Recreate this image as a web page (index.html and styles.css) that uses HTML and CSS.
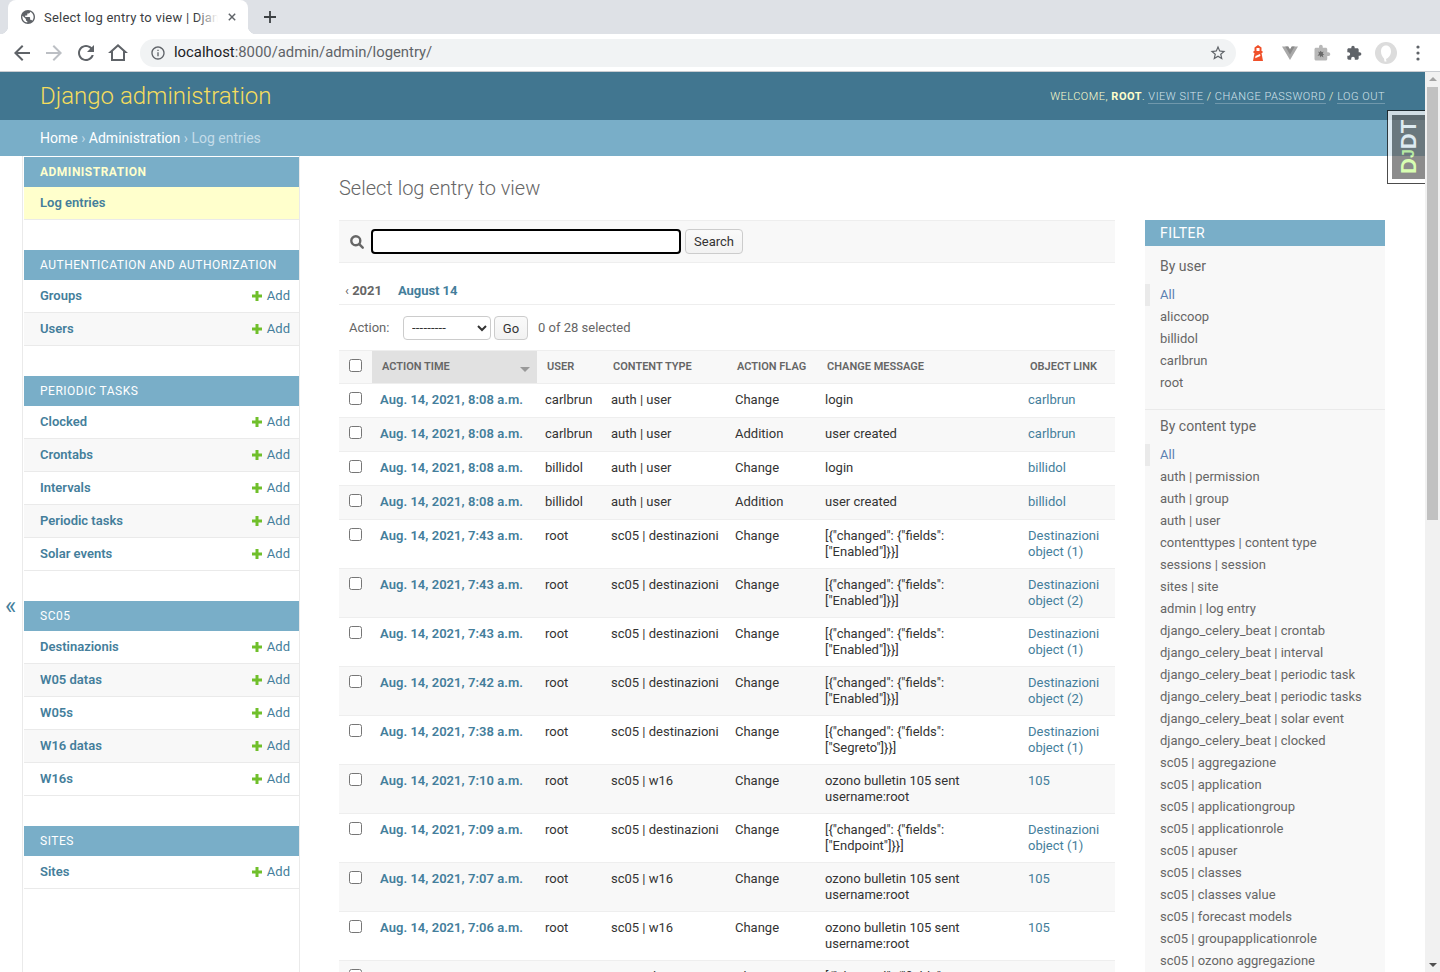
FILE: index.html
```html
<!DOCTYPE html>
<html lang="en">
<head>
<meta charset="utf-8">
<title>Select log entry to view | Django site admin</title>
<link rel="stylesheet" href="styles.css">
</head>
<body>
<div class="window">
  <div class="chrome">
    <div class="tabstrip">
      <div class="tab">
        <svg class="tab-globe" viewBox="2 2 20 20"><path d="M12 2C6.48 2 2 6.48 2 12s4.48 10 10 10 10-4.48 10-10S17.52 2 12 2zm-1 17.93c-3.95-.49-7-3.85-7-7.93 0-.62.08-1.21.21-1.79L9 15v1c0 1.1.9 2 2 2v1.93zm6.9-2.54c-.26-.81-1-1.39-1.9-1.39h-1v-3c0-.55-.45-1-1-1H8v-2h2c.55 0 1-.45 1-1V7h2c1.1 0 2-.9 2-2v-.41c2.93 1.19 5 4.06 5 7.41 0 2.08-.8 3.97-2.1 5.39z"/></svg>
        <span class="tab-title">Select log entry to view | Django site admin</span>
        <svg class="tab-close" viewBox="0 0 10 10"><path d="M1 1l8 8M9 1l-8 8"/></svg>
      </div>
      <svg class="new-tab" viewBox="0 0 12 12"><path d="M6 0v12M0 6h12"/></svg>
    </div>
    <div class="toolbar">
      <svg class="tool" viewBox="0 0 24 24"><path d="M20 11H7.83l5.59-5.59L12 4l-8 8 8 8 1.41-1.41L7.83 13H20v-2z"/></svg>
      <svg class="tool tool-off" viewBox="0 0 24 24"><path d="M12 4l-1.41 1.41L16.17 11H4v2h12.17l-5.58 5.59L12 20l8-8z"/></svg>
      <svg class="tool" viewBox="0 0 24 24"><path d="M17.65 6.35C16.2 4.9 14.21 4 12 4c-4.42 0-7.99 3.58-7.99 8s3.57 8 7.99 8c3.73 0 6.84-2.55 7.73-6h-2.08c-.82 2.33-3.04 4-5.65 4-3.31 0-6-2.69-6-6s2.69-6 6-6c1.66 0 3.14.69 4.22 1.78L13 11h7V4l-2.35 2.35z"/></svg>
      <svg class="tool" viewBox="0 0 24 24"><path d="M12 5.69l5 4.5V18H7v-7.81l5-4.5M12 3L2 12h3v8h14v-8h3L12 3z"/></svg>
      <div class="omnibox">
        <svg class="omni-info" viewBox="0 0 24 24"><path d="M11 7h2v2h-2zm0 4h2v6h-2zm1-9C6.48 2 2 6.48 2 12s4.48 10 10 10 10-4.48 10-10S17.52 2 12 2zm0 18c-4.41 0-8-3.59-8-8s3.59-8 8-8 8 3.59 8 8-3.59 8-8 8z"/></svg>
        <span class="url"><span class="url-host">localhost</span>:8000/admin/admin/logentry/</span>
        <svg class="omni-star" viewBox="0 0 24 24"><path d="M22 9.24l-7.19-.62L12 2 9.19 8.63 2 9.24l5.46 4.73L5.82 21 12 17.27 18.18 21l-1.63-7.03L22 9.24zM12 15.4l-3.76 2.27 1-4.28-3.32-2.88 4.38-.38L12 6.1l1.71 4.04 4.38.38-3.32 2.88 1 4.28L12 15.4z"/></svg>
      </div>
      <div class="extensions">
        <svg class="ext" viewBox="0 0 16 16"><path class="ext-red" d="M8 0l3.500 2.500V6H12.500v2h-1l1.500 8H3l1.500-8h-1V6H4.500V2.500z"/><path class="ext-white" d="M6.500 3h3v3h-3zM5.500 11l4.500-2 .4 2-5.200 2.300z"/></svg>
        <svg class="ext" viewBox="0 0 16 16"><path class="ext-vue-a" d="M0 1.500h6.200L8 4.600 9.800 1.500H16L8 15z"/><path class="ext-vue-b" d="M3.300 1.500h2.900L8 4.600 9.800 1.500h2.900L8 9.600z"/></svg>
        <svg class="ext ext-wide" viewBox="0 0 24 24"><path class="ext-puzzle-light" d="M20.500 11H19V7c0-1.100-.9-2-2-2h-4V3.500C13 2.120 11.880 1 10.500 1S8 2.120 8 3.500V5H4c-1.100 0-2 .9-2 2v13c0 1.100.9 2 2 2h13c1.100 0 2-.9 2-2v-4h1.500c1.380 0 2.500-1.120 2.500-2.500S21.880 11 20.500 11z"/><path class="ext-puzzle-noise" d="M7 10l2 1 1-2 2 2 2-1-1 3 2 1-2 1 1 3-3-2-1 2-1-3-3 1 2-3z"/></svg>
        <svg class="ext" viewBox="0 0 24 24"><path class="ext-puzzle" d="M20.500 11H19V7c0-1.100-.9-2-2-2h-4V3.500C13 2.120 11.880 1 10.500 1S8 2.120 8 3.500V5H4c-1.100 0-1.990.9-1.990 2v3.800H3.500c1.490 0 2.700 1.210 2.700 2.700s-1.210 2.700-2.700 2.700H2V20c0 1.100.9 2 2 2h3.800v-1.500c0-1.490 1.210-2.700 2.700-2.700 1.490 0 2.700 1.210 2.700 2.700V22H17c1.100 0 2-.9 2-2v-4h1.500c1.380 0 2.500-1.120 2.500-2.500S21.880 11 20.500 11z"/></svg>
        <svg class="avatar" viewBox="0 0 22 22"><circle class="avatar-bg" cx="11" cy="11" r="11"/><path class="avatar-head" d="M11 3.500c-3.200 0-5 2.500-5 6 0 3 1.500 5.500 3 7l.5 3h2l-.5-2.500c2.500-1 5-4 5-7.500 0-3.500-1.800-6-5-6z"/></svg>
        <svg class="menu-dots" viewBox="0 0 4 16"><circle cx="2" cy="2" r="1.600"/><circle cx="2" cy="8" r="1.600"/><circle cx="2" cy="14" r="1.600"/></svg>
      </div>
    </div>
  </div>

  <div class="viewport">
    <div class="page">
      <header class="site-header">
        <div class="branding">Django administration</div>
        <div class="user-tools">Welcome, <strong>root</strong>. <a href="#">View site</a> / <a href="#">Change password</a> / <a href="#">Log out</a></div>
      </header>
      <nav class="breadcrumbs"><a href="#">Home</a> › <a href="#">Administration</a> › Log entries</nav>

      <div class="main">
        <div class="toggle"><span class="toggle-glyph">«</span></div>
        <aside class="sidebar">
          <section class="module current">
            <h2 class="caption">Administration</h2>
            <div class="nav-row nav-current"><a class="nav-link" href="#">Log entries</a></div>
          </section>
          <section class="module">
            <h2 class="caption">Authentication and Authorization</h2>
            <div class="nav-row"><a class="nav-link" href="#">Groups</a><a class="add" href="#"><svg class="plus" viewBox="0 0 10 10"><path d="M3.500 0h3v3.500H10v3H6.500V10h-3V6.500H0v-3h3.500z"/></svg>Add</a></div>
            <div class="nav-row"><a class="nav-link" href="#">Users</a><a class="add" href="#"><svg class="plus" viewBox="0 0 10 10"><path d="M3.500 0h3v3.500H10v3H6.500V10h-3V6.500H0v-3h3.500z"/></svg>Add</a></div>
          </section>
          <section class="module">
            <h2 class="caption">Periodic Tasks</h2>
            <div class="nav-row"><a class="nav-link" href="#">Clocked</a><a class="add" href="#"><svg class="plus" viewBox="0 0 10 10"><path d="M3.500 0h3v3.500H10v3H6.500V10h-3V6.500H0v-3h3.500z"/></svg>Add</a></div>
            <div class="nav-row"><a class="nav-link" href="#">Crontabs</a><a class="add" href="#"><svg class="plus" viewBox="0 0 10 10"><path d="M3.500 0h3v3.500H10v3H6.500V10h-3V6.500H0v-3h3.500z"/></svg>Add</a></div>
            <div class="nav-row"><a class="nav-link" href="#">Intervals</a><a class="add" href="#"><svg class="plus" viewBox="0 0 10 10"><path d="M3.500 0h3v3.500H10v3H6.500V10h-3V6.500H0v-3h3.500z"/></svg>Add</a></div>
            <div class="nav-row"><a class="nav-link" href="#">Periodic tasks</a><a class="add" href="#"><svg class="plus" viewBox="0 0 10 10"><path d="M3.500 0h3v3.500H10v3H6.500V10h-3V6.500H0v-3h3.500z"/></svg>Add</a></div>
            <div class="nav-row"><a class="nav-link" href="#">Solar events</a><a class="add" href="#"><svg class="plus" viewBox="0 0 10 10"><path d="M3.500 0h3v3.500H10v3H6.500V10h-3V6.500H0v-3h3.500z"/></svg>Add</a></div>
          </section>
          <section class="module">
            <h2 class="caption">Sc05</h2>
            <div class="nav-row"><a class="nav-link" href="#">Destinazionis</a><a class="add" href="#"><svg class="plus" viewBox="0 0 10 10"><path d="M3.500 0h3v3.500H10v3H6.500V10h-3V6.500H0v-3h3.500z"/></svg>Add</a></div>
            <div class="nav-row"><a class="nav-link" href="#">W05 datas</a><a class="add" href="#"><svg class="plus" viewBox="0 0 10 10"><path d="M3.500 0h3v3.500H10v3H6.500V10h-3V6.500H0v-3h3.500z"/></svg>Add</a></div>
            <div class="nav-row"><a class="nav-link" href="#">W05s</a><a class="add" href="#"><svg class="plus" viewBox="0 0 10 10"><path d="M3.500 0h3v3.500H10v3H6.500V10h-3V6.500H0v-3h3.500z"/></svg>Add</a></div>
            <div class="nav-row"><a class="nav-link" href="#">W16 datas</a><a class="add" href="#"><svg class="plus" viewBox="0 0 10 10"><path d="M3.500 0h3v3.500H10v3H6.500V10h-3V6.500H0v-3h3.500z"/></svg>Add</a></div>
            <div class="nav-row"><a class="nav-link" href="#">W16s</a><a class="add" href="#"><svg class="plus" viewBox="0 0 10 10"><path d="M3.500 0h3v3.500H10v3H6.500V10h-3V6.500H0v-3h3.500z"/></svg>Add</a></div>
          </section>
          <section class="module">
            <h2 class="caption">Sites</h2>
            <div class="nav-row"><a class="nav-link" href="#">Sites</a><a class="add" href="#"><svg class="plus" viewBox="0 0 10 10"><path d="M3.500 0h3v3.500H10v3H6.500V10h-3V6.500H0v-3h3.500z"/></svg>Add</a></div>
          </section>
        </aside>

        <main class="content">
          <h1 class="title">Select log entry to view</h1>
          <div class="changelist">
            <div class="results-col">
              <form class="search-bar">
                <svg class="search-icon" viewBox="0 0 14 14"><circle cx="5.800" cy="5.800" r="4.500"/><path d="M9.200 9.200l3.500 3.500"/></svg>
                <input class="search-input" type="text">
                <button class="btn btn-search" type="button">Search</button>
              </form>
              <div class="date-links"><span class="date-back">‹</span> <span class="date-year">2021</span><a class="date-day" href="#">August 14</a></div>
              <div class="actions">
                <span class="action-label">Action:</span>
                <select class="action-select"><option>---------</option></select>
                <button class="btn btn-go" type="button">Go</button>
                <span class="action-counter">0 of 28 selected</span>
              </div>
              <table class="results">
                <colgroup>
                  <col class="c-check"><col class="c-time"><col class="c-user"><col class="c-type"><col class="c-flag"><col class="c-msg"><col class="c-obj">
                </colgroup>
                <thead>
                  <tr>
                    <th class="th-check"><input class="check" type="checkbox"></th>
                    <th class="th-sorted"><span class="th-text">Action time</span><span class="sort-arrow"></span></th>
                    <th><span class="th-text">User</span></th>
                    <th><span class="th-text">Content type</span></th>
                    <th><span class="th-text">Action flag</span></th>
                    <th><span class="th-text">Change message</span></th>
                    <th><span class="th-text">Object link</span></th>
                  </tr>
                </thead>
                <tbody>
                  <tr><td class="td-check"><input class="check" type="checkbox"></td><td><a class="time" href="#">Aug. 14, 2021, 8:08 a.m.</a></td><td>carlbrun</td><td>auth | user</td><td>Change</td><td>login</td><td><a class="obj" href="#">carlbrun</a></td></tr>
                  <tr><td class="td-check"><input class="check" type="checkbox"></td><td><a class="time" href="#">Aug. 14, 2021, 8:08 a.m.</a></td><td>carlbrun</td><td>auth | user</td><td>Addition</td><td>user created</td><td><a class="obj" href="#">carlbrun</a></td></tr>
                  <tr><td class="td-check"><input class="check" type="checkbox"></td><td><a class="time" href="#">Aug. 14, 2021, 8:08 a.m.</a></td><td>billidol</td><td>auth | user</td><td>Change</td><td>login</td><td><a class="obj" href="#">billidol</a></td></tr>
                  <tr><td class="td-check"><input class="check" type="checkbox"></td><td><a class="time" href="#">Aug. 14, 2021, 8:08 a.m.</a></td><td>billidol</td><td>auth | user</td><td>Addition</td><td>user created</td><td><a class="obj" href="#">billidol</a></td></tr>
                  <tr><td class="td-check"><input class="check" type="checkbox"></td><td><a class="time" href="#">Aug. 14, 2021, 7:43 a.m.</a></td><td>root</td><td>sc05 | destinazioni</td><td>Change</td><td>[{"changed": {"fields": ["Enabled"]}}]</td><td><a class="obj" href="#">Destinazioni object (1)</a></td></tr>
                  <tr><td class="td-check"><input class="check" type="checkbox"></td><td><a class="time" href="#">Aug. 14, 2021, 7:43 a.m.</a></td><td>root</td><td>sc05 | destinazioni</td><td>Change</td><td>[{"changed": {"fields": ["Enabled"]}}]</td><td><a class="obj" href="#">Destinazioni object (2)</a></td></tr>
                  <tr><td class="td-check"><input class="check" type="checkbox"></td><td><a class="time" href="#">Aug. 14, 2021, 7:43 a.m.</a></td><td>root</td><td>sc05 | destinazioni</td><td>Change</td><td>[{"changed": {"fields": ["Enabled"]}}]</td><td><a class="obj" href="#">Destinazioni object (1)</a></td></tr>
                  <tr><td class="td-check"><input class="check" type="checkbox"></td><td><a class="time" href="#">Aug. 14, 2021, 7:42 a.m.</a></td><td>root</td><td>sc05 | destinazioni</td><td>Change</td><td>[{"changed": {"fields": ["Enabled"]}}]</td><td><a class="obj" href="#">Destinazioni object (2)</a></td></tr>
                  <tr><td class="td-check"><input class="check" type="checkbox"></td><td><a class="time" href="#">Aug. 14, 2021, 7:38 a.m.</a></td><td>root</td><td>sc05 | destinazioni</td><td>Change</td><td>[{"changed": {"fields": ["Segreto"]}}]</td><td><a class="obj" href="#">Destinazioni object (1)</a></td></tr>
                  <tr><td class="td-check"><input class="check" type="checkbox"></td><td><a class="time" href="#">Aug. 14, 2021, 7:10 a.m.</a></td><td>root</td><td>sc05 | w16</td><td>Change</td><td>ozono bulletin 105 sent username:root</td><td><a class="obj" href="#">105</a></td></tr>
                  <tr><td class="td-check"><input class="check" type="checkbox"></td><td><a class="time" href="#">Aug. 14, 2021, 7:09 a.m.</a></td><td>root</td><td>sc05 | destinazioni</td><td>Change</td><td>[{"changed": {"fields": ["Endpoint"]}}]</td><td><a class="obj" href="#">Destinazioni object (1)</a></td></tr>
                  <tr><td class="td-check"><input class="check" type="checkbox"></td><td><a class="time" href="#">Aug. 14, 2021, 7:07 a.m.</a></td><td>root</td><td>sc05 | w16</td><td>Change</td><td>ozono bulletin 105 sent username:root</td><td><a class="obj" href="#">105</a></td></tr>
                  <tr><td class="td-check"><input class="check" type="checkbox"></td><td><a class="time" href="#">Aug. 14, 2021, 7:06 a.m.</a></td><td>root</td><td>sc05 | w16</td><td>Change</td><td>ozono bulletin 105 sent username:root</td><td><a class="obj" href="#">105</a></td></tr>
                  <tr><td class="td-check"><input class="check" type="checkbox"></td><td><a class="time" href="#">Aug. 14, 2021, 7:05 a.m.</a></td><td>root</td><td>sc05 | destinazioni</td><td>Change</td><td>[{"changed": {"fields": ["Enabled"]}}]</td><td><a class="obj" href="#">Destinazioni object (1)</a></td></tr>
                </tbody>
              </table>
            </div>
            <aside class="filter">
              <h2 class="filter-title">Filter</h2>
              <h3 class="filter-head">By user</h3>
              <ul class="filter-list">
                <li class="selected"><a href="#">All</a></li>
                <li><a href="#">aliccoop</a></li>
                <li><a href="#">billidol</a></li>
                <li><a href="#">carlbrun</a></li>
                <li><a href="#">root</a></li>
              </ul>
              <h3 class="filter-head">By content type</h3>
              <ul class="filter-list">
                <li class="selected"><a href="#">All</a></li>
                <li><a href="#">auth | permission</a></li>
                <li><a href="#">auth | group</a></li>
                <li><a href="#">auth | user</a></li>
                <li><a href="#">contenttypes | content type</a></li>
                <li><a href="#">sessions | session</a></li>
                <li><a href="#">sites | site</a></li>
                <li><a href="#">admin | log entry</a></li>
                <li><a href="#">django_celery_beat | crontab</a></li>
                <li><a href="#">django_celery_beat | interval</a></li>
                <li><a href="#">django_celery_beat | periodic task</a></li>
                <li><a href="#">django_celery_beat | periodic tasks</a></li>
                <li><a href="#">django_celery_beat | solar event</a></li>
                <li><a href="#">django_celery_beat | clocked</a></li>
                <li><a href="#">sc05 | aggregazione</a></li>
                <li><a href="#">sc05 | application</a></li>
                <li><a href="#">sc05 | applicationgroup</a></li>
                <li><a href="#">sc05 | applicationrole</a></li>
                <li><a href="#">sc05 | apuser</a></li>
                <li><a href="#">sc05 | classes</a></li>
                <li><a href="#">sc05 | classes value</a></li>
                <li><a href="#">sc05 | forecast models</a></li>
                <li><a href="#">sc05 | groupapplicationrole</a></li>
                <li><a href="#">sc05 | ozono aggregazione</a></li>
              </ul>
            </aside>
          </div>
        </main>
      </div>

      <div class="djdt"><div class="djdt-button"><span class="djdt-d">D</span><span class="djdt-j">J</span>DT</div></div>
    </div>
    <div class="scrollbar">
      <span class="arrow-up"></span>
      <div class="track"><div class="thumb"></div></div>
      <span class="arrow-down"></span>
    </div>
  </div>
</div>
</body>
</html>
```

FILE: styles.css
```css
* { box-sizing: border-box; }
html, body { margin: 0; padding: 0; height: 100%; overflow: hidden; }
body { font-family: Roboto, "Liberation Sans", sans-serif; font-size: 14px; color: #333; background: #fff; }
a { text-decoration: none; }
h1, h2, h3, ul { margin: 0; padding: 0; }
ul { list-style: none; }

.window { height: 972px; display: flex; flex-direction: column; overflow: hidden; }

/* browser chrome */
.chrome { flex: none; height: 72px; background: #fff; border-bottom: 1px solid #c9ccd1; }
.tabstrip { height: 34px; background: #dee1e6; display: flex; align-items: center; padding-left: 8px; }
.tab { position: relative; width: 240px; height: 34px; background: #fff; border-radius: 8px 8px 0 0; display: flex; align-items: center; padding-left: 13px; }
.tab::before, .tab::after { content: ""; position: absolute; bottom: 0; width: 8px; height: 8px; }
.tab::before { left: -8px; background: radial-gradient(circle at 0 0, #dee1e6 8px, #fff 8.5px); }
.tab::after { right: -8px; background: radial-gradient(circle at 100% 0, #dee1e6 8px, #fff 8.5px); }
.tab-globe { width: 14px; height: 14px; fill: #5f6368; flex: none; }
.tab-title { position: relative; margin-left: 9px; width: 174px; overflow: hidden; white-space: nowrap; font-size: 13px; color: #3c4043; letter-spacing: .22px; }
.tab-title::after { content: ""; position: absolute; right: 0; top: 0; bottom: 0; width: 22px; background: linear-gradient(to right, rgba(255,255,255,0), #fff); }
.tab-close { width: 8px; height: 8px; margin-left: 10px; stroke: #5f6368; stroke-width: 1.8; fill: none; flex: none; }
.new-tab { width: 12px; height: 12px; margin-left: 16px; stroke: #3c4043; stroke-width: 1.8; fill: none; flex: none; }

.toolbar { height: 37px; display: flex; align-items: center; padding: 0 0 0 10px; }
.tool { width: 24px; height: 24px; margin-right: 8px; fill: #5f6368; flex: none; }
.tool-off { fill: #bcbfc4; }
.omnibox { width: 1096px; height: 28px; margin-left: 2px; border-radius: 14px; background: #f1f3f4; display: flex; align-items: center; padding-left: 10px; padding-right: 9px; flex: none; }
.omni-info { width: 16px; height: 16px; fill: #5f6368; flex: none; }
.url { margin-left: 8px; padding-bottom: 2px; font-size: 14.85px; color: #5f6368; flex: 1; white-space: nowrap; }
.url-host { color: #202124; }
.omni-star { width: 18px; height: 18px; fill: #5f6368; flex: none; }
.extensions { display: flex; align-items: center; flex: 1; padding-left: 14px; }
.ext { width: 16px; height: 16px; margin-right: 16px; flex: none; }
.ext-wide { width: 18px; height: 18px; margin-left: -1px; margin-right: 15px; }
.ext-red { fill: #f0502a; }
.ext-white { fill: #fff; }
.ext-vue-a { fill: #a9a9a9; }
.ext-vue-b { fill: #8a8a8a; }
.ext-puzzle-light { fill: #b8b8b8; }
.ext-puzzle-noise { fill: #6a6a6a; }
.ext-puzzle { fill: #5f6368; }
.avatar { width: 22px; height: 22px; margin-left: -3px; margin-right: 0; flex: none; }
.avatar-bg { fill: #dcdcdc; }
.avatar-head { fill: #fff; }
.menu-dots { width: 4px; height: 16px; margin-left: 19px; fill: #5f6368; flex: none; }

/* viewport */
.viewport { flex: 1; min-height: 0; display: flex; }
.page { position: relative; flex: 1; min-width: 0; overflow: hidden; }
.scrollbar { width: 15px; flex: none; background: #f1f1f1; display: flex; flex-direction: column; align-items: center; }
.arrow-up { margin-top: 5px; width: 0; height: 0; border: 4px solid transparent; border-top: 0; border-bottom: 4px solid #a3a3a3; }
.arrow-down { margin-bottom: 5px; width: 0; height: 0; border: 4px solid transparent; border-bottom: 0; border-top: 4px solid #505050; }
.track { flex: 1; width: 100%; padding: 6px 2px 0 2px; }
.thumb { height: 433px; background: #c1c1c1; }

/* django header */
.site-header { height: 48px; background: #417690; display: flex; align-items: center; justify-content: space-between; padding: 0 40px; }
.branding { font-size: 24px; font-weight: 300; color: #f5dd5d; }
.user-tools { font-size: 11px; font-weight: 300; letter-spacing: .5px; text-transform: uppercase; color: #ffc; }
.user-tools strong { font-weight: 700; }
.user-tools a { color: #d4e4ec; border-bottom: 1px solid rgba(255,255,255,.25); }
.breadcrumbs { height: 36px; background: #79aec8; padding: 10px 40px; font-size: 14px; line-height: 16px; color: #c4dce8; }
.breadcrumbs a { color: #fff; }

.main { display: flex; align-items: stretch; }

.toggle { flex: none; width: 23px; border-right: 1px solid #eaeaea; padding: 436px 0 0 5px; color: #447e9b; font-size: 24px; line-height: 28px; }
.sidebar { flex: none; width: 277px; padding: 1px 0 0 1px; border-right: 1px solid #eaeaea; min-height: 816px; }
.module { margin-bottom: 30px; }
.caption { height: 30px; padding: 8px 16px; background: #79aec8; color: #fff; font-size: 12px; line-height: 15px; font-weight: 400; letter-spacing: .5px; text-transform: uppercase; }
.current .caption { color: #ffc; font-weight: 700; }
.nav-row { height: 33px; padding: 0 9px 1px 16px; border-bottom: 1px solid #eaeaea; display: flex; align-items: center; justify-content: space-between; font-size: 13px; background: #fff; }
.module .nav-row:nth-child(odd) { background: #f8f8f8; }
.module .nav-current { background: #ffc; }
.nav-link { font-weight: 600; color: #447e9b; }
.add { color: #447e9b; display: flex; align-items: center; }
.plus { width: 10px; height: 10px; fill: #70bf2b; margin-right: 5px; }

/* content */
.content { flex: 1; min-width: 0; padding: 20px 40px 0 39px; }
.title { font-size: 20px; line-height: 24px; font-weight: 300; color: #666; margin-bottom: 20px; }
.changelist { display: flex; align-items: flex-start; gap: 30px; }
.results-col { width: 776px; flex: none; }
.filter { width: 240px; flex: none; background: #f8f8f8; }

.search-bar { height: 43px; background: #f8f8f8; border-top: 1px solid #eee; border-bottom: 1px solid #eee; display: flex; align-items: center; padding-left: 11px; }
.search-icon { width: 14px; height: 14px; fill: none; stroke: #666; stroke-width: 2.4; stroke-linecap: round; flex: none; }
.search-input { width: 310px; height: 25px; margin-left: 7px; border: 2px solid #000; border-radius: 4px; background: #fff; padding: 2px 5px; outline: none; flex: none; }
.btn { font-family: Roboto, "Liberation Sans", sans-serif; font-size: 13px; color: #333; background: linear-gradient(#fafafa, #f2f2f2); border: 1px solid #ccc; border-radius: 4px; padding: 0; cursor: pointer; }
.btn-search { width: 58px; height: 25px; margin-left: 4px; }
.date-links { height: 42px; padding: 0 6px; border-bottom: 1px solid #eee; font-size: 13px; font-weight: 700; line-height: 55px; color: #666; white-space: nowrap; overflow: hidden; }
.date-back { font-weight: 400; }
.date-year { color: #666; }
.date-day { color: #447e9b; margin-left: 16px; letter-spacing: -.05px; }
.actions { height: 45px; display: flex; align-items: center; padding: 0 0 0 10px; font-size: 13px; color: #666; }
.action-label { width: 54px; flex: none; }
.action-select { width: 88px; height: 24px; border: 1px solid #ccc; border-radius: 4px; background: #fff; font-family: Roboto, "Liberation Sans", sans-serif; font-size: 13px; letter-spacing: .2px; color: #333; padding: 0 0 0 4px; flex: none; }
.btn-go { width: 34px; height: 24px; margin-left: 3px; padding-top: 2px; flex: none; }
.action-counter { margin-left: 10px; }

.results { width: 776px; table-layout: fixed; border-collapse: separate; border-spacing: 0; font-size: 13px; line-height: 16px; color: #333; }
.c-check { width: 33px; } .c-time { width: 165px; } .c-user { width: 66px; } .c-type { width: 124px; } .c-flag { width: 90px; } .c-msg { width: 203px; } .c-obj { width: 95px; }
.results th { position: relative; padding: 0; text-align: left; vertical-align: top; background: #f8f8f8; border-top: 1px solid #eee; border-bottom: 1px solid #eee; font-size: 11px; font-weight: 600; color: #666; text-transform: uppercase; white-space: nowrap; }
.th-text { display: block; padding: 8px 10px; }
.results .th-check { padding: 8px 0 0 10px; }
.results .th-sorted { background: #e1e1e1; }
.sort-arrow { position: absolute; right: 7px; top: 16px; width: 0; height: 0; border: 5px solid transparent; border-bottom: 0; border-top: 5px solid #999; }
.results td { height: 34px; padding: 8px; vertical-align: top; border-bottom: 1px solid #eee; overflow: hidden; }
.results .td-check { padding: 8px 0 0 10px; }
.results tbody tr:nth-child(even) td { background: #f8f8f8; }
.check { display: block; width: 13px; height: 13px; margin: 0; }
.time { font-weight: 600; color: #447e9b; white-space: nowrap; letter-spacing: .04px; }
.obj { color: #447e9b; }

.filter-title { height: 26px; padding: 5px 15px; background: #79aec8; color: #fff; font-size: 14px; line-height: 16px; font-weight: 400; text-transform: uppercase; letter-spacing: .5px; }
.filter-head { margin: 12px 15px 0; font-size: 14px; line-height: 16px; font-weight: 400; color: #666; }
.filter-list ~ .filter-head { margin-top: 8px; }
.filter-list { margin-top: 10px; padding-bottom: 15px; border-bottom: 1px solid #eaeaea; font-size: 13px; }
.filter-list li { height: 22px; padding-left: 15px; line-height: 21px; }
.filter-list a { color: #666; }
.filter-list .selected { border-left: 5px solid #eaeaea; padding-left: 10px; }
.filter-list .selected a { color: #5b80b2; }

/* debug toolbar handle */
.djdt { position: absolute; top: 38px; right: 0; width: 38px; height: 74px; background: #fff; border: 1px solid #111; border-right: 0; opacity: .75; padding: 4px 0 4px 4px; }
.djdt-button { height: 100%; background: #666; color: #fff; font-family: "Liberation Sans", sans-serif; font-size: 22px; font-weight: 700; line-height: 33px; writing-mode: vertical-rl; transform: rotate(180deg); text-align: center; white-space: nowrap; }
.djdt-d, .djdt-j { color: #cf9; }
.djdt-j { font-size: 16px; }
```
